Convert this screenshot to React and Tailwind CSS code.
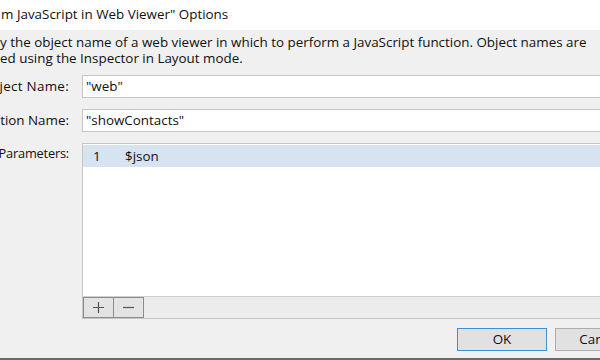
export default function App() {
  const font = { fontFamily: '"Open Sans", "Noto Sans", sans-serif' };
  return (
    <div
      className="w-[600px] h-[360px] overflow-hidden flex flex-col bg-[#f0f0f0] text-[13.4px] text-[#101010]"
      style={font}
    >
      {/* Title bar */}
      <div className="h-[30px] shrink-0 bg-white flex items-center pl-[1px] pb-[1px] whitespace-nowrap">
        m JavaScript in Web Viewer" Options
      </div>

      {/* Body */}
      <div className="flex-1 flex flex-col">
        <div className="pt-[4px] leading-[16px] whitespace-nowrap">
          <div>y the object name of a web viewer in which to perform a JavaScript function. Object names are</div>
          <div>ed using the Inspector in Layout mode.</div>
        </div>

        <div className="mt-[9px] flex flex-col gap-[11px]">
          <div className="flex items-center">
            <div className="w-[69px] shrink-0 whitespace-nowrap flex justify-end tracking-[0.3px]">ject Name:</div>
            <div className="ml-[13px] w-[560px] shrink-0 h-[23px] bg-white border border-[#c6c6c6] flex items-center pl-[3px]">
              "web"
            </div>
          </div>
          <div className="flex items-center">
            <div className="w-[69px] shrink-0 whitespace-nowrap flex justify-end">tion Name:</div>
            <div className="ml-[13px] w-[560px] shrink-0 h-[23px] bg-white border border-[#c6c6c6] flex items-center pl-[3px]">
              "showContacts"
            </div>
          </div>
          <div className="flex items-start">
            <div className="w-[69px] shrink-0 whitespace-nowrap flex justify-end pt-[1px] text-[12.8px] tracking-[-0.2px]">Parameters:</div>
            <div className="ml-[13px] w-[560px] shrink-0 flex flex-col border border-[#c6c6c6]">
              <div className="h-[152px] bg-white pt-[1px]">
                <div className="h-[22px] bg-[#d6e3f1] flex items-center">
                  <span className="w-[42px] pl-[10px]">1</span>
                  <span>$json</span>
                </div>
              </div>
              <div className="h-[22px] bg-[#ececec] border-t border-[#d0d0d0] flex">
                <div className="w-[31px] h-full bg-[#e3e3e3] border border-[#8c8c8c] flex items-center justify-center">
                  <svg width="13" height="13" viewBox="0 0 13 13">
                    <path d="M6.5 1v11M1 6.5h11" stroke="#555" strokeWidth="1.2" />
                  </svg>
                </div>
                <div className="w-[30px] h-full bg-[#e3e3e3] border border-l-0 border-[#8c8c8c] flex items-center justify-center">
                  <svg width="13" height="13" viewBox="0 0 13 13">
                    <path d="M1 6.5h11" stroke="#555" strokeWidth="1.2" />
                  </svg>
                </div>
              </div>
            </div>
          </div>
        </div>

        {/* Buttons */}
        <div className="mt-[9px] flex pl-[457px] gap-[8px]">
          <div className="w-[90px] shrink-0 h-[23px] bg-[#e1e1e1] border border-[#3c8fd9] flex items-center justify-center">
            OK
          </div>
          <div className="w-[90px] shrink-0 h-[23px] bg-[#e1e1e1] border border-[#adadad] flex items-center justify-center">
            Cancel
          </div>
        </div>
        <div className="flex-1" />
        <div className="h-[2px] bg-[#6a6a6a]" />
      </div>
    </div>
  );
}
